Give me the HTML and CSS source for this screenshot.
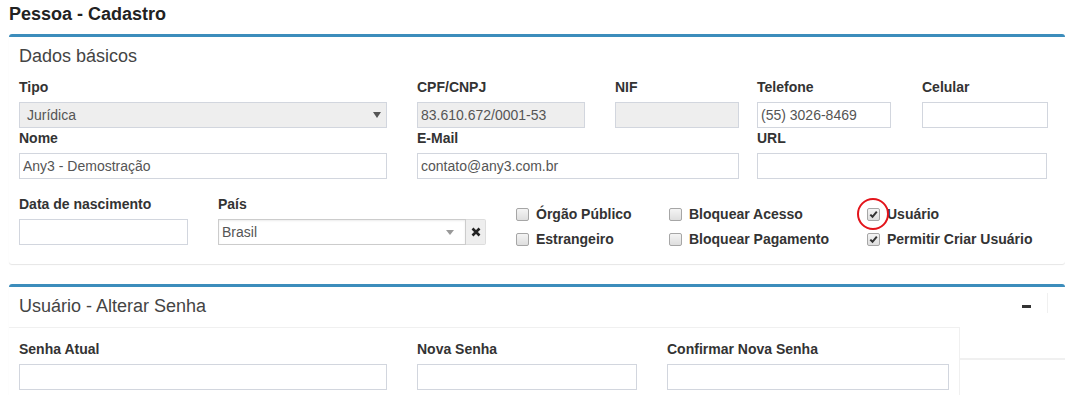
FILE: index.html
```html
<!DOCTYPE html>
<html lang="pt-BR">
<head>
  <meta charset="UTF-8" />
  <meta name="viewport" content="width=device-width, initial-scale=1.0"/>
  <title>Pessoa - Cadastro</title>
  <link rel="stylesheet" href="styles.css">
</head>
<body>

  <h1 class="titulo-pagina">Pessoa - Cadastro</h1>

  <!-- Dados básicos -->
  <div class="box">
    <div class="box-header">
      <h3 class="box-title">Dados básicos</h3>
    </div>
    <div class="box-body">
      <div class="linha">
        <div class="campo campo-tipo">
          <label>Tipo</label>
          <div class="select desabilitado">
            <span>Jurídica</span>
            <svg class="seta" width="8" height="6" viewBox="0 0 8 6"><polygon points="0,0 8,0 4,6" fill="#555"/></svg>
          </div>
        </div>
        <div class="campo campo-cpf">
          <label>CPF/CNPJ</label>
          <input type="text" value="83.610.672/0001-53" disabled>
        </div>
        <div class="campo campo-nif">
          <label>NIF</label>
          <input type="text" disabled>
        </div>
        <div class="campo campo-telefone">
          <label>Telefone</label>
          <input type="text" value="(55) 3026-8469">
        </div>
        <div class="campo campo-celular">
          <label>Celular</label>
          <input type="text">
        </div>
      </div>

      <div class="linha">
        <div class="campo campo-nome">
          <label>Nome</label>
          <input type="text" value="Any3 - Demostração">
        </div>
        <div class="campo campo-email">
          <label>E-Mail</label>
          <input type="text" value="contato@any3.com.br">
        </div>
        <div class="campo campo-url">
          <label>URL</label>
          <input type="text">
        </div>
      </div>

      <div class="linha linha-extra">
        <div class="campo campo-data">
          <label>Data de nascimento</label>
          <input type="text">
        </div>
        <div class="campo campo-pais">
          <label>País</label>
          <div class="select2">
            <div class="select2-escolha">
              <span>Brasil</span>
              <svg class="seta" width="8" height="5" viewBox="0 0 8 5"><polygon points="0,0 8,0 4,5" fill="#999"/></svg>
            </div>
            <button class="select2-limpar" type="button">
              <svg width="10" height="10" viewBox="0 0 10 10"><path d="M1.5 1.5 L8.5 8.5 M8.5 1.5 L1.5 8.5" stroke="#222" stroke-width="2.6"/></svg>
            </button>
          </div>
        </div>

        <div class="opcoes">
          <div class="opcao"><span class="check"></span>Órgão Público</div>
          <div class="opcao"><span class="check"></span>Bloquear Acesso</div>
          <div class="opcao">
            <span class="check marcado">
              <svg width="9" height="9" viewBox="0 0 9 9"><path d="M1.3 4.6 L3.5 6.8 L7.8 1.6" fill="none" stroke="#333" stroke-width="2"/></svg>
              <span class="destaque"></span>
            </span>Usuário
          </div>
          <div class="opcao"><span class="check"></span>Estrangeiro</div>
          <div class="opcao"><span class="check"></span>Bloquear Pagamento</div>
          <div class="opcao">
            <span class="check marcado">
              <svg width="9" height="9" viewBox="0 0 9 9"><path d="M1.3 4.6 L3.5 6.8 L7.8 1.6" fill="none" stroke="#333" stroke-width="2"/></svg>
            </span>Permitir Criar Usuário
          </div>
        </div>
      </div>
    </div>
  </div>

  <!-- Usuário - Alterar Senha -->
  <div class="box">
    <div class="box-header">
      <h3 class="box-title">Usuário - Alterar Senha</h3>
      <div class="ferramentas">
        <button class="btn-minimizar" type="button"><span class="traco"></span></button>
        <span class="separador"></span>
      </div>
    </div>
    <div class="box-body-senha">
      <div class="painel-senha">
        <div class="linha">
          <div class="campo campo-senha-atual">
            <label>Senha Atual</label>
            <input type="password">
          </div>
          <div class="campo campo-nova-senha">
            <label>Nova Senha</label>
            <input type="password">
          </div>
          <div class="campo campo-confirmar">
            <label>Confirmar Nova Senha</label>
            <input type="password">
          </div>
        </div>
      </div>
      <div class="painel-vazio"></div>
    </div>
  </div>

</body>
</html>
```

FILE: styles.css
```css
html, body {
  overflow: hidden;
}

body {
  margin: 0;
  font-family: "Liberation Sans", Arial, sans-serif;
  font-size: 14px;
  color: #333;
  background-color: #fff;
}

.titulo-pagina {
  margin: 4px 9px 10px;
  font-size: 18px;
  line-height: 20px;
  font-weight: bold;
  color: #222;
}

/* caixas */
.box {
  margin: 0 0 20px 9px;
  background-color: #fff;
  border-top: 3px solid #3c8dbc;
  border-radius: 3px;
  box-shadow: 0 1px 1px rgba(0, 0, 0, 0.1);
}

.box-header {
  display: flex;
  align-items: center;
  padding: 10px;
}

.box + .box .box-header {
  padding-bottom: 12px;
}

.box-title {
  margin: 0;
  font-size: 18px;
  line-height: 18px;
  font-weight: normal;
  color: #444;
}

.box-body {
  padding: 2px 10px 15px;
}

/* campos */
.linha {
  display: flex;
}

.linha-extra {
  margin-top: 15px;
}

.campo {
  margin-right: 30px;
}

.campo label {
  display: block;
  line-height: 20px;
  margin-bottom: 5px;
  font-weight: bold;
  color: #333;
}

input {
  display: block;
  width: 100%;
  height: 26px;
  box-sizing: border-box;
  padding: 0 3px;
  border: 1px solid #d2d6de;
  font-family: "Liberation Sans", Arial, sans-serif;
  font-size: 14px;
  color: #555;
  background-color: #fff;
}

input:disabled {
  background-color: #eee;
}

.campo-tipo, .campo-nome, .campo-senha-atual { width: 368px; }
.campo-cpf { width: 168px; }
.campo-nif { width: 124px; margin-right: 18px; }
.campo-telefone { width: 134px; margin-right: 31px; }
.campo-celular { width: 126px; margin-right: 0; }
.campo-email { width: 322px; margin-right: 18px; }
.campo-url { width: 290px; margin-right: 0; }
.campo-data { width: 169px; }
.campo-pais { width: 268px; }
.campo-nova-senha { width: 220px; }
.campo-confirmar { width: 282px; margin-right: 0; }

/* selects */
.select {
  display: flex;
  align-items: center;
  justify-content: space-between;
  height: 26px;
  box-sizing: border-box;
  padding: 0 5px 0 7px;
  border: 1px solid #d2d6de;
  color: #555;
}

.select.desabilitado {
  background-color: #eee;
}

.select2 {
  display: flex;
  height: 26px;
}

.select2-escolha {
  flex: 1;
  display: flex;
  align-items: center;
  justify-content: space-between;
  padding: 0 11px 0 3px;
  border: 1px solid #ccc;
  box-shadow: inset 0 1px 2px rgba(0, 0, 0, 0.08);
  color: #555;
}

.select2-limpar {
  width: 20px;
  padding: 0;
  display: flex;
  align-items: center;
  justify-content: center;
  border: 1px solid #ddd;
  border-left: none;
  background-color: #eee;
  border-radius: 0 2px 2px 0;
}

/* checkboxes */
.opcoes {
  display: grid;
  grid-template-columns: 153px 198px auto;
  row-gap: 5px;
  margin-top: 10px;
  align-self: flex-start;
}

.opcao {
  display: flex;
  align-items: center;
  line-height: 20px;
  font-weight: bold;
  color: #333;
}

.check {
  position: relative;
  display: flex;
  align-items: center;
  justify-content: center;
  width: 13px;
  height: 13px;
  box-sizing: border-box;
  margin-right: 7px;
  border: 1px solid #a6a6a6;
  border-radius: 2px;
  background: linear-gradient(#f4f4f4, #dedede);
}

.destaque {
  position: absolute;
  left: -11px;
  top: -11px;
  width: 32px;
  height: 32px;
  box-sizing: border-box;
  border: 2px solid #e3141b;
  border-radius: 50%;
}

/* ferramentas do box */
.ferramentas {
  display: flex;
  align-items: center;
  height: 18px;
  margin-left: auto;
  margin-right: 7px;
}

.btn-minimizar {
  width: 20px;
  height: 18px;
  padding: 0;
  display: flex;
  align-items: center;
  justify-content: center;
  border: none;
  background: none;
}

.traco {
  display: block;
  width: 9px;
  height: 3px;
  background-color: #333;
}

.separador {
  width: 1px;
  height: 20px;
  margin: 0 0 6px 11px;
  background-color: #f0f0f0;
}

/* corpo do box de senha */
.box-body-senha {
  display: flex;
}

.painel-senha {
  width: 930px;
  padding: 11px 10px 10px;
  border-top: 1px solid #f0f0f0;
  border-right: 1px solid #f0f0f0;
}

.painel-vazio {
  flex: 1;
  margin-top: 31px;
  border-top: 2px solid #f0f0f0;
}
```
